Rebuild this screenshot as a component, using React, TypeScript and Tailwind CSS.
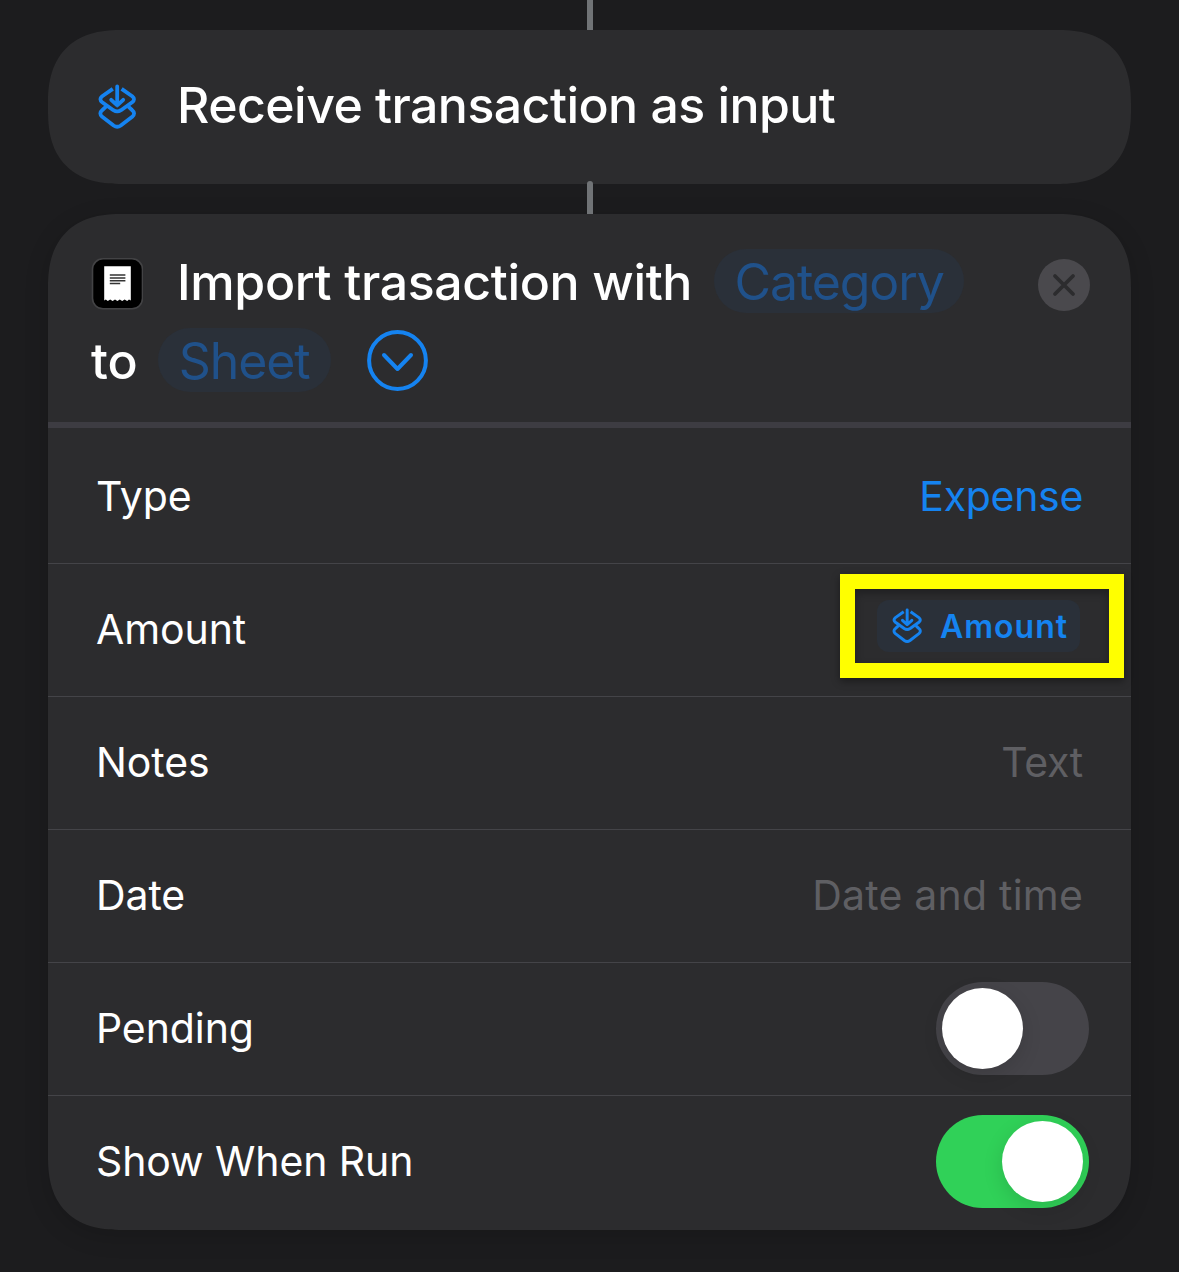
import type { ReactNode } from "react";

function InputIcon({ className }: { className: string }) {
  return (
    <svg
      className={className}
      viewBox="0 0 38 46"
      fill="none"
      stroke="#1583f0"
      strokeWidth="3.8"
      strokeLinecap="round"
      strokeLinejoin="round"
    >
      <path d="M19.2 2.4V21.2M13.2 15.8L19.2 21.4L25.2 15.8" />
      <path
        strokeLinecap="butt"
        d="M14.8 4.9L4.2 12.3Q0.6 15.3 4.2 18.2L15.4 26.2Q19.2 28.6 23 26.2L34.2 18.2Q37.8 15.3 34.2 12.3L23.6 4.9"
      />
      <path d="M7.2 23.4L4.4 26Q0.4 29.4 4.2 32.8L15.6 41.5Q19.2 44 22.8 41.5L34.2 32.8Q38 29.4 34 26L31.2 23.4" />
    </svg>
  );
}

function ReceiptIcon() {
  return (
    <svg className="mt-[5px] h-[52px] w-[52px] shrink-0" viewBox="0 0 52 52">
      <rect x="1.5" y="0.8" width="50" height="50" rx="10.5" fill="#000" stroke="#434345" strokeWidth="1.6" />
      <path
        d="M13.2 8.2H39.8V42.6L38 41.4L36.2 43L33.6 41.4L31.2 43L28.8 41.4L26.4 43L24 41.4L21.6 43L19.2 41.4L16.8 43L14.8 41.4L13.2 42.6Z"
        fill="#fff"
      />
      <path d="M18.8 17.1H34.4M18.8 19.9H34.4M18.8 22.7H34.4M18.8 25.4H29.2" stroke="#333" strokeWidth="1.5" />
    </svg>
  );
}

function Toggle({ on }: { on: boolean }) {
  return (
    <div
      className={
        on
          ? "-mt-0.5 flex h-[93px] w-[153px] justify-end rounded-full bg-[#30d158] p-1.5"
          : "-mt-0.5 flex h-[93px] w-[153px] justify-start rounded-full bg-[#454449] p-1.5"
      }
    >
      <div className="h-[81px] w-[81px] rounded-full bg-white shadow-[0_6px_20px_rgba(0,0,0,0.13)]" />
    </div>
  );
}

function Row({ label, children, first = false }: { label: string; children: ReactNode; first?: boolean }) {
  return (
    <div
      className={
        first
          ? "flex h-[135px] items-center justify-between pt-[3px] pr-12 pl-12"
          : "flex h-[133px] items-center justify-between border-t border-[#444448] pr-12 pl-12"
      }
    >
      <span className="-mt-0.5 text-[41px] leading-none tracking-[-0.1px] text-white">{label}</span>
      {children}
    </div>
  );
}

export default function App() {
  return (
    <div className="flex h-[1272px] w-[1179px] flex-col items-center overflow-hidden bg-[#1c1c1e] font-['Inter',sans-serif]">
      <div className="h-[30px] w-1.5 shrink-0 bg-[#707376]" />
      <section className="flex h-[154px] w-[1083px] shrink-0 items-center rounded-[74px] bg-[#2c2c2e] pl-[50px] [corner-shape:superellipse(1.3)]">
        <InputIcon className="h-[46px] w-[38px]" />
        <h2 className="-mt-1 ml-[41px] text-[50px] leading-none font-medium tracking-[-0.55px] whitespace-nowrap text-white">
          Receive transaction as input
        </h2>
      </section>
      <div className="relative -mt-[3px] h-[33px] w-1.5 shrink-0 rounded-t-full bg-[#707376]" />

      <section className="h-[1016px] w-[1083px] shrink-0 rounded-[74px] bg-[#2c2c2e] shadow-[0_6px_24px_rgba(0,0,0,0.16)] [corner-shape:superellipse(1.3)]">
        <header className="h-[214px] border-b-6 border-[#3d3c42] pt-[35px] pr-[41px] pl-[43px] text-[50px] leading-none font-medium text-white">
          <div className="flex h-16 items-center">
            <ReceiptIcon />
            <span className="mt-0.5 ml-[34px] tracking-[-0.35px] whitespace-nowrap">Import trasaction with</span>
            <span className="ml-[22px] flex h-16 w-[250px] items-center justify-center rounded-full bg-[#2a3039] pt-0.5 font-normal tracking-[-1.1px] text-[#20518a]">
              Category
            </span>
            <button className="mt-2 ml-auto flex h-[52px] w-[52px] items-center justify-center rounded-full bg-[#4a494d]">
              <svg className="h-6 w-6" viewBox="0 0 24 24" stroke="#2c2c2e" strokeWidth="3.8" strokeLinecap="round">
                <path d="M3 3L21 21M21 3L3 21" />
              </svg>
            </button>
          </div>
          <div className="mt-4 flex h-[62px] items-center">
            <span className="mt-0.5">to</span>
            <span className="ml-5 flex h-16 w-[173px] items-center justify-center rounded-full bg-[#2a3039] pt-0.5 font-normal tracking-[-1.1px] text-[#20518a]">
              Sheet
            </span>
            <svg
              className="ml-9 h-[61px] w-[61px]"
              viewBox="0 0 61 61"
              fill="none"
              stroke="#1583f0"
              strokeWidth="4"
              strokeLinecap="round"
              strokeLinejoin="round"
            >
              <circle cx="30.5" cy="30.5" r="28.4" />
              <path d="M17 25L30.5 39L44 25" />
            </svg>
          </div>
        </header>

        <Row label="Type" first>
          <span className="-mt-0.5 text-[41px] leading-none tracking-[-0.3px] text-[#1583f0]">Expense</span>
        </Row>
        <Row label="Amount">
          <div className="-mt-2 -mr-[41px] flex h-[104px] w-[284px] items-center border-15 border-[#ffff00] pl-[22px] shadow-[0_3px_8px_rgba(0,0,0,0.4),inset_0_4px_8px_rgba(0,0,0,0.3)]">
            <div className="flex h-[52px] w-[203px] items-center rounded-xl bg-[#2a3039] pl-[15px]">
              <InputIcon className="h-[36px] w-[30px]" />
              <span className="mt-0.5 ml-[18px] text-[32px] leading-none font-semibold tracking-[1px] text-[#1583f0]">Amount</span>
            </div>
          </div>
        </Row>
        <Row label="Notes">
          <span className="-mt-0.5 text-[41px] leading-none tracking-[-0.3px] text-[#5f5f63]">Text</span>
        </Row>
        <Row label="Date">
          <span className="-mt-0.5 text-[41px] leading-none tracking-[0.2px] text-[#5f5f63]">Date and time</span>
        </Row>
        <Row label="Pending">
          <div className="-mr-1.5">
            <Toggle on={false} />
          </div>
        </Row>
        <Row label="Show When Run">
          <div className="-mr-1.5">
            <Toggle on />
          </div>
        </Row>
      </section>
    </div>
  );
}
